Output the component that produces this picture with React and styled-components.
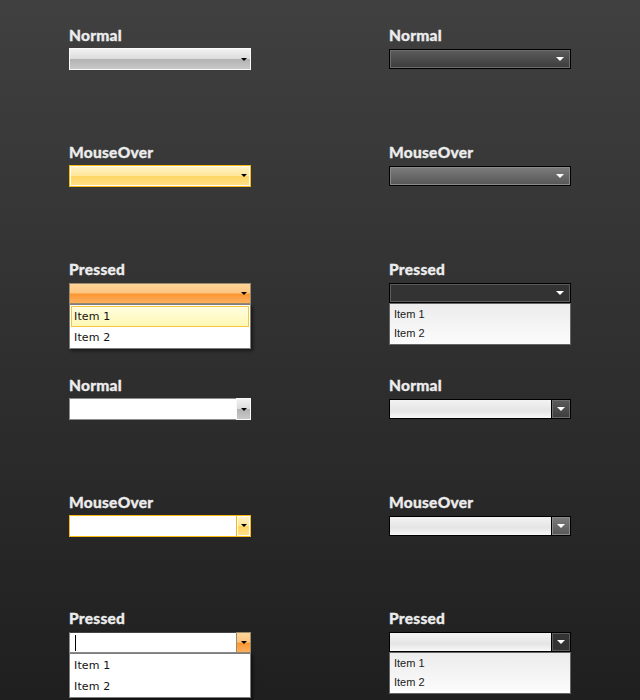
import React from "react";
import styled, { createGlobalStyle } from "styled-components";

const GlobalStyle = createGlobalStyle`
  html, body {
    margin: 0;
    padding: 0;
    background: #1f1f1f;
  }
`;

const Page = styled.div`
  width: 640px;
  height: 700px;
  overflow: hidden;
  box-sizing: border-box;
  padding: 26.4px 0 0 69px;
  background: linear-gradient(180deg, #404040 0%, #1f1f1f 100%);
  display: grid;
  grid-template-columns: 182px 182px;
  column-gap: 138px;
  grid-auto-rows: 116.6px;
`;

const Cell = styled.div`
  position: relative;
`;

const Label = styled.div`
  height: 23px;
  line-height: 18px;
  font-family: "Lato", "Liberation Sans", sans-serif;
  font-size: 15.5px;
  font-weight: 900;
  letter-spacing: 0.25px;
  color: #ececec;
  -webkit-text-stroke: 0.3px #ececec;
`;

const arrowStyles = {
  gray: "#000",
  yellow: "#000",
  orange: "#000",
  dark: "#fff",
  hover: "#fff",
  press: "#fff"
};

const skins = {
  gray: `
    border: 1px solid #fafafa;
    background: linear-gradient(180deg, #f2f2f2 0%, #dcdcdc 48%, #b2b2b2 50%, #c8c8c8 100%);
  `,
  yellow: `
    border: 1px solid #f7b90f;
    box-shadow: inset 0 0 0 1px #fffdf2;
    background: linear-gradient(180deg, #fff3c8 0%, #ffe79a 48%, #fdd663 52%, #ffe08a 100%);
  `,
  orange: `
    border: 1px solid #9a8a70;
    background: linear-gradient(180deg, #fed498 0%, #fdc581 48%, #fb9530 52%, #fdb060 100%);
  `,
  dark: `
    border: 1px solid #000;
    box-shadow: inset 0 0 0 1px #6e6e6e;
    background: linear-gradient(180deg, #5c5c5c 0%, #3c3c3c 100%);
  `,
  hover: `
    border: 1px solid #000;
    box-shadow: inset 0 0 0 1px #8a8a8a;
    background: linear-gradient(180deg, #7c7c7c 0%, #565656 100%);
  `,
  press: `
    border: 1px solid #000;
    box-shadow: inset 0 0 0 1px #5c5c5c;
    background: #333;
  `
};

const Bar = styled.div`
  box-sizing: border-box;
  height: ${p => p.$height}px;
  margin-top: ${p => (p.$lift ? "-1px" : "0")};
  display: flex;
  align-items: center;
  justify-content: flex-end;
  padding-right: ${p => p.$pad}px;
  ${p => skins[p.$skin]}
`;

const Arrow = styled.span`
  width: 0;
  height: 0;
  border-left: ${p => p.$size}px solid transparent;
  border-right: ${p => p.$size}px solid transparent;
  border-top: ${p => p.$size}px solid ${p => arrowStyles[p.$skin]};
`;

const Field = styled.div`
  box-sizing: border-box;
  height: ${p => p.$height}px;
  margin-top: ${p => (p.$lift ? "-1px" : "0")};
  display: flex;
`;

const fieldSkins = {
  plain: `
    border: 1px solid #8c8c8c;
    background: #fff;
  `,
  amber: `
    border: 1px solid #f7b90f;
    background: #fff;
  `,
  pressed: `
    border: 1px solid #8c8c8c;
    border-top-color: #444;
    background: #fff;
  `,
  silver: `
    border: 1px solid #000;
    background: linear-gradient(180deg, #f3f3f3 0%, #e5e5e5 60%, #f8f8f8 100%);
  `
};

const Input = styled.div`
  box-sizing: border-box;
  flex: 1;
  padding: 2px 0 0 5px;
  ${p => fieldSkins[p.$skin]}
`;

const Caret = styled.div`
  width: 1px;
  height: 16px;
  background: #000;
`;

const FieldButton = styled.div`
  box-sizing: border-box;
  width: ${p => p.$width}px;
  margin-left: -1px;
  display: flex;
  align-items: center;
  justify-content: center;
  ${p => skins[p.$skin]}
`;

const Popup = styled.div`
  position: absolute;
  z-index: 2;
  left: 0;
  right: 0;
  top: ${p => p.$top}px;
  box-sizing: border-box;
  height: ${p => p.$height}px;
  border: 1px solid ${p => (p.$dark ? "#666" : "#7e7e7e")};
  background: ${p =>
    p.$dark ? "linear-gradient(180deg, #ececec 0%, #fcfcfc 100%)" : "#fff"};
  box-shadow: ${p => (p.$dark ? "none" : "2px 2px 3px rgba(0, 0, 0, 0.5)")};
  padding: ${p => (p.$dark ? "1px 0 0" : "1px")};
`;

const LightItem = styled.div`
  box-sizing: border-box;
  height: 21px;
  line-height: 19px;
  padding-left: 2px;
  font-family: "DejaVu Sans", sans-serif;
  font-size: 11px;
  letter-spacing: 0.15px;
  color: #111;
  border: 1px solid ${p => (p.$active ? "#f5c83c" : "transparent")};
  background: ${p =>
    p.$active
      ? "linear-gradient(180deg, #fffde0 0%, #fff8b4 100%)"
      : "transparent"};
`;

const DarkItem = styled.div`
  height: 19px;
  line-height: 19px;
  padding-left: 4px;
  font-family: "Liberation Sans", sans-serif;
  font-size: 11px;
  color: #1a1a1a;
`;

const DarkList = () => (
  <>
    <DarkItem>Item 1</DarkItem>
    <DarkItem>Item 2</DarkItem>
  </>
);

const App = () => (
  <Page>
    <GlobalStyle />
    <Cell>
      <Label>Normal</Label>
      <Bar $skin="gray" $height={22} $pad={3} $lift>
        <Arrow $skin="gray" $size={3} />
      </Bar>
    </Cell>
    <Cell>
      <Label>Normal</Label>
      <Bar $skin="dark" $height={20} $pad={6}>
        <Arrow $skin="dark" $size={4} />
      </Bar>
    </Cell>

    <Cell>
      <Label>MouseOver</Label>
      <Bar $skin="yellow" $height={22} $pad={3} $lift>
        <Arrow $skin="yellow" $size={3} />
      </Bar>
    </Cell>
    <Cell>
      <Label>MouseOver</Label>
      <Bar $skin="hover" $height={20} $pad={6}>
        <Arrow $skin="hover" $size={4} />
      </Bar>
    </Cell>

    <Cell>
      <Label>Pressed</Label>
      <Bar $skin="orange" $height={21} $pad={3}>
        <Arrow $skin="orange" $size={3} />
      </Bar>
      <Popup $top={44} $height={45}>
        <LightItem $active>Item 1</LightItem>
        <LightItem>Item 2</LightItem>
      </Popup>
    </Cell>
    <Cell>
      <Label>Pressed</Label>
      <Bar $skin="press" $height={20} $pad={6}>
        <Arrow $skin="press" $size={4} />
      </Bar>
      <Popup $dark $top={43} $height={42}>
        <DarkList />
      </Popup>
    </Cell>

    <Cell>
      <Label>Normal</Label>
      <Field $height={22} $lift>
        <Input $skin="plain" />
        <FieldButton $skin="gray" $width={15}>
          <Arrow $skin="gray" $size={3} />
        </FieldButton>
      </Field>
    </Cell>
    <Cell>
      <Label>Normal</Label>
      <Field $height={20}>
        <Input $skin="silver" />
        <FieldButton $skin="dark" $width={20}>
          <Arrow $skin="dark" $size={4} />
        </FieldButton>
      </Field>
    </Cell>

    <Cell>
      <Label>MouseOver</Label>
      <Field $height={22} $lift>
        <Input $skin="amber" />
        <FieldButton $skin="yellow" $width={15}>
          <Arrow $skin="yellow" $size={3} />
        </FieldButton>
      </Field>
    </Cell>
    <Cell>
      <Label>MouseOver</Label>
      <Field $height={20}>
        <Input $skin="silver" />
        <FieldButton $skin="hover" $width={20}>
          <Arrow $skin="hover" $size={4} />
        </FieldButton>
      </Field>
    </Cell>

    <Cell>
      <Label>Pressed</Label>
      <Field $height={21}>
        <Input $skin="pressed">
          <Caret />
        </Input>
        <FieldButton $skin="orange" $width={15}>
          <Arrow $skin="orange" $size={3} />
        </FieldButton>
      </Field>
      <Popup $top={44} $height={45}>
        <LightItem>Item 1</LightItem>
        <LightItem>Item 2</LightItem>
      </Popup>
    </Cell>
    <Cell>
      <Label>Pressed</Label>
      <Field $height={20}>
        <Input $skin="silver" />
        <FieldButton $skin="press" $width={20}>
          <Arrow $skin="press" $size={4} />
        </FieldButton>
      </Field>
      <Popup $dark $top={43} $height={42}>
        <DarkList />
      </Popup>
    </Cell>
  </Page>
);

export default App;
